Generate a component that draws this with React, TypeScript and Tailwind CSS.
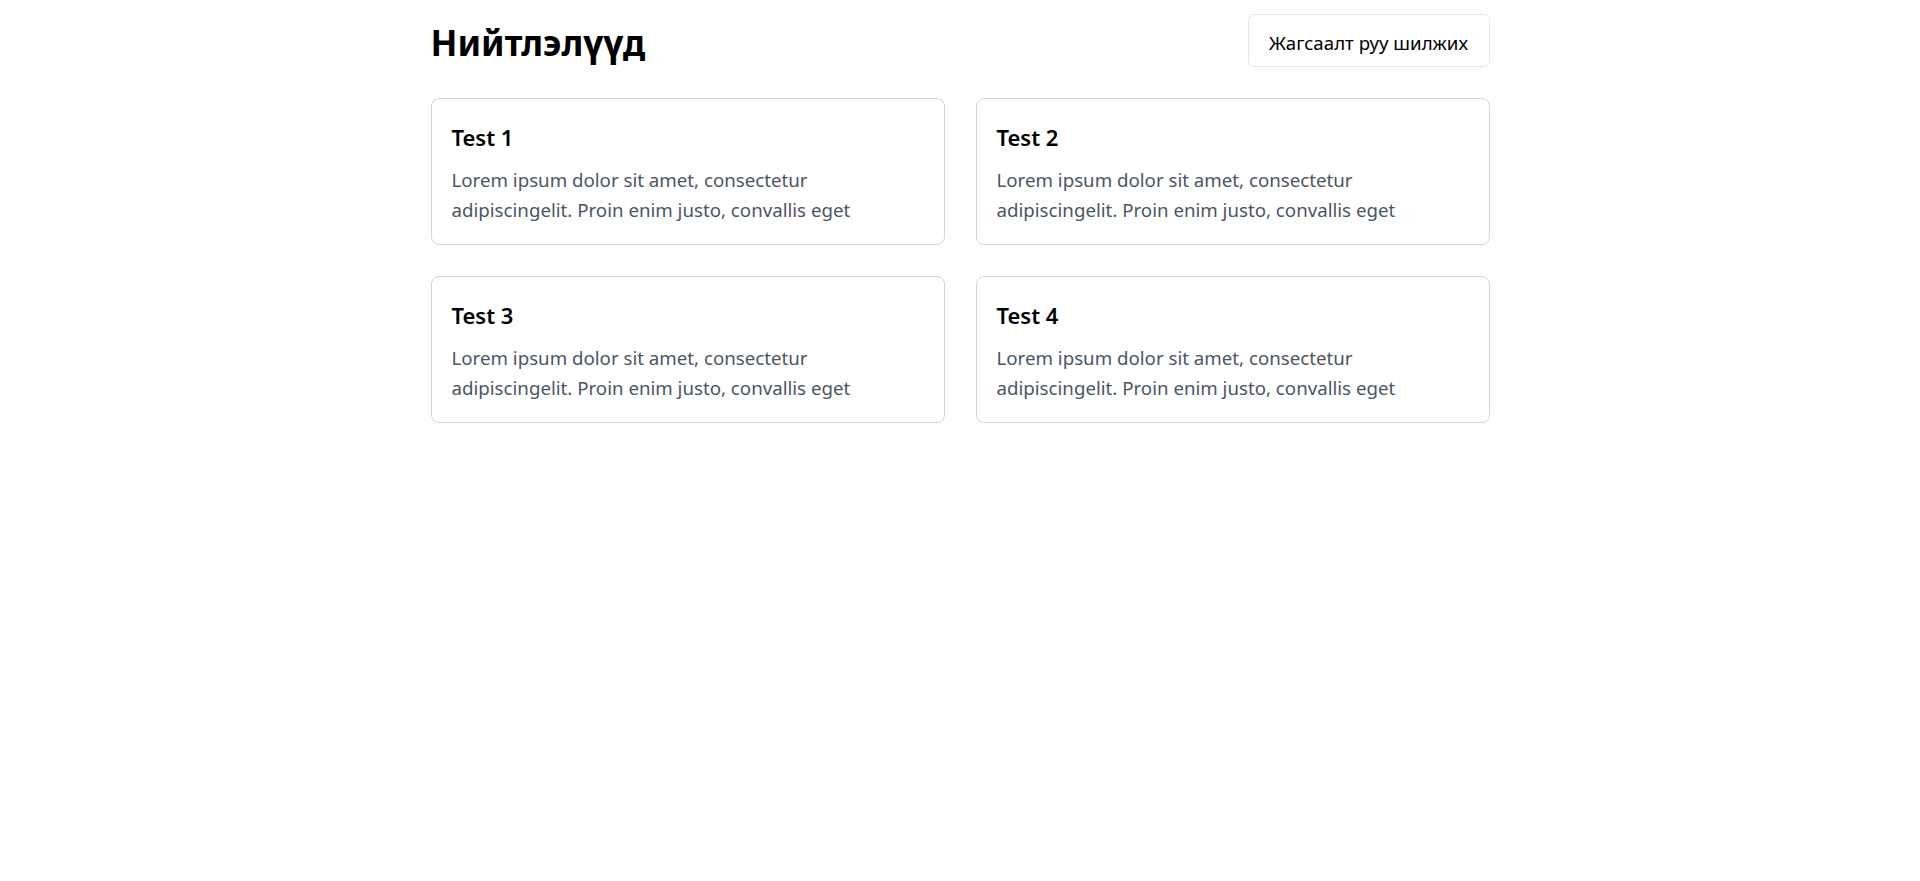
const posts = [
  { id: 1, title: 'Test 1' },
  { id: 2, title: 'Test 2' },
  { id: 3, title: 'Test 3' },
  { id: 4, title: 'Test 4' },
]

const body =
  'Lorem ipsum dolor sit amet, consectetur adipiscingelit. Proin enim justo, convallis eget'

export default function App() {
  return (
    <div className="min-h-screen bg-white font-['Noto_Sans',sans-serif]">
      <div className="mx-auto w-[1059px] pt-[14px]">
        {/* Header */}
        <div className="flex items-start justify-between">
          <h1 className="mt-[9px] text-[35px] font-bold leading-10 text-black">Нийтлэлүүд</h1>
          <button className="h-[53px] w-[242px] rounded-md border border-gray-200 bg-white pt-[4px] text-center text-[18.7px] leading-[47px] text-black">
            Жагсаалт руу шилжих
          </button>
        </div>

        {/* Posts */}
        <div className="mt-[31px] grid grid-cols-2 gap-[31px]">
          {posts.map((post) => (
            <div key={post.id} className="rounded-lg border border-gray-300 px-5 pt-[22px] pb-[19px]">
              <h2 className="text-[22px] font-semibold leading-8 text-black">{post.title}</h2>
              <p className="mt-[12px] text-[18.7px] leading-[30px] text-gray-600">{body}</p>
            </div>
          ))}
        </div>
      </div>
    </div>
  )
}
